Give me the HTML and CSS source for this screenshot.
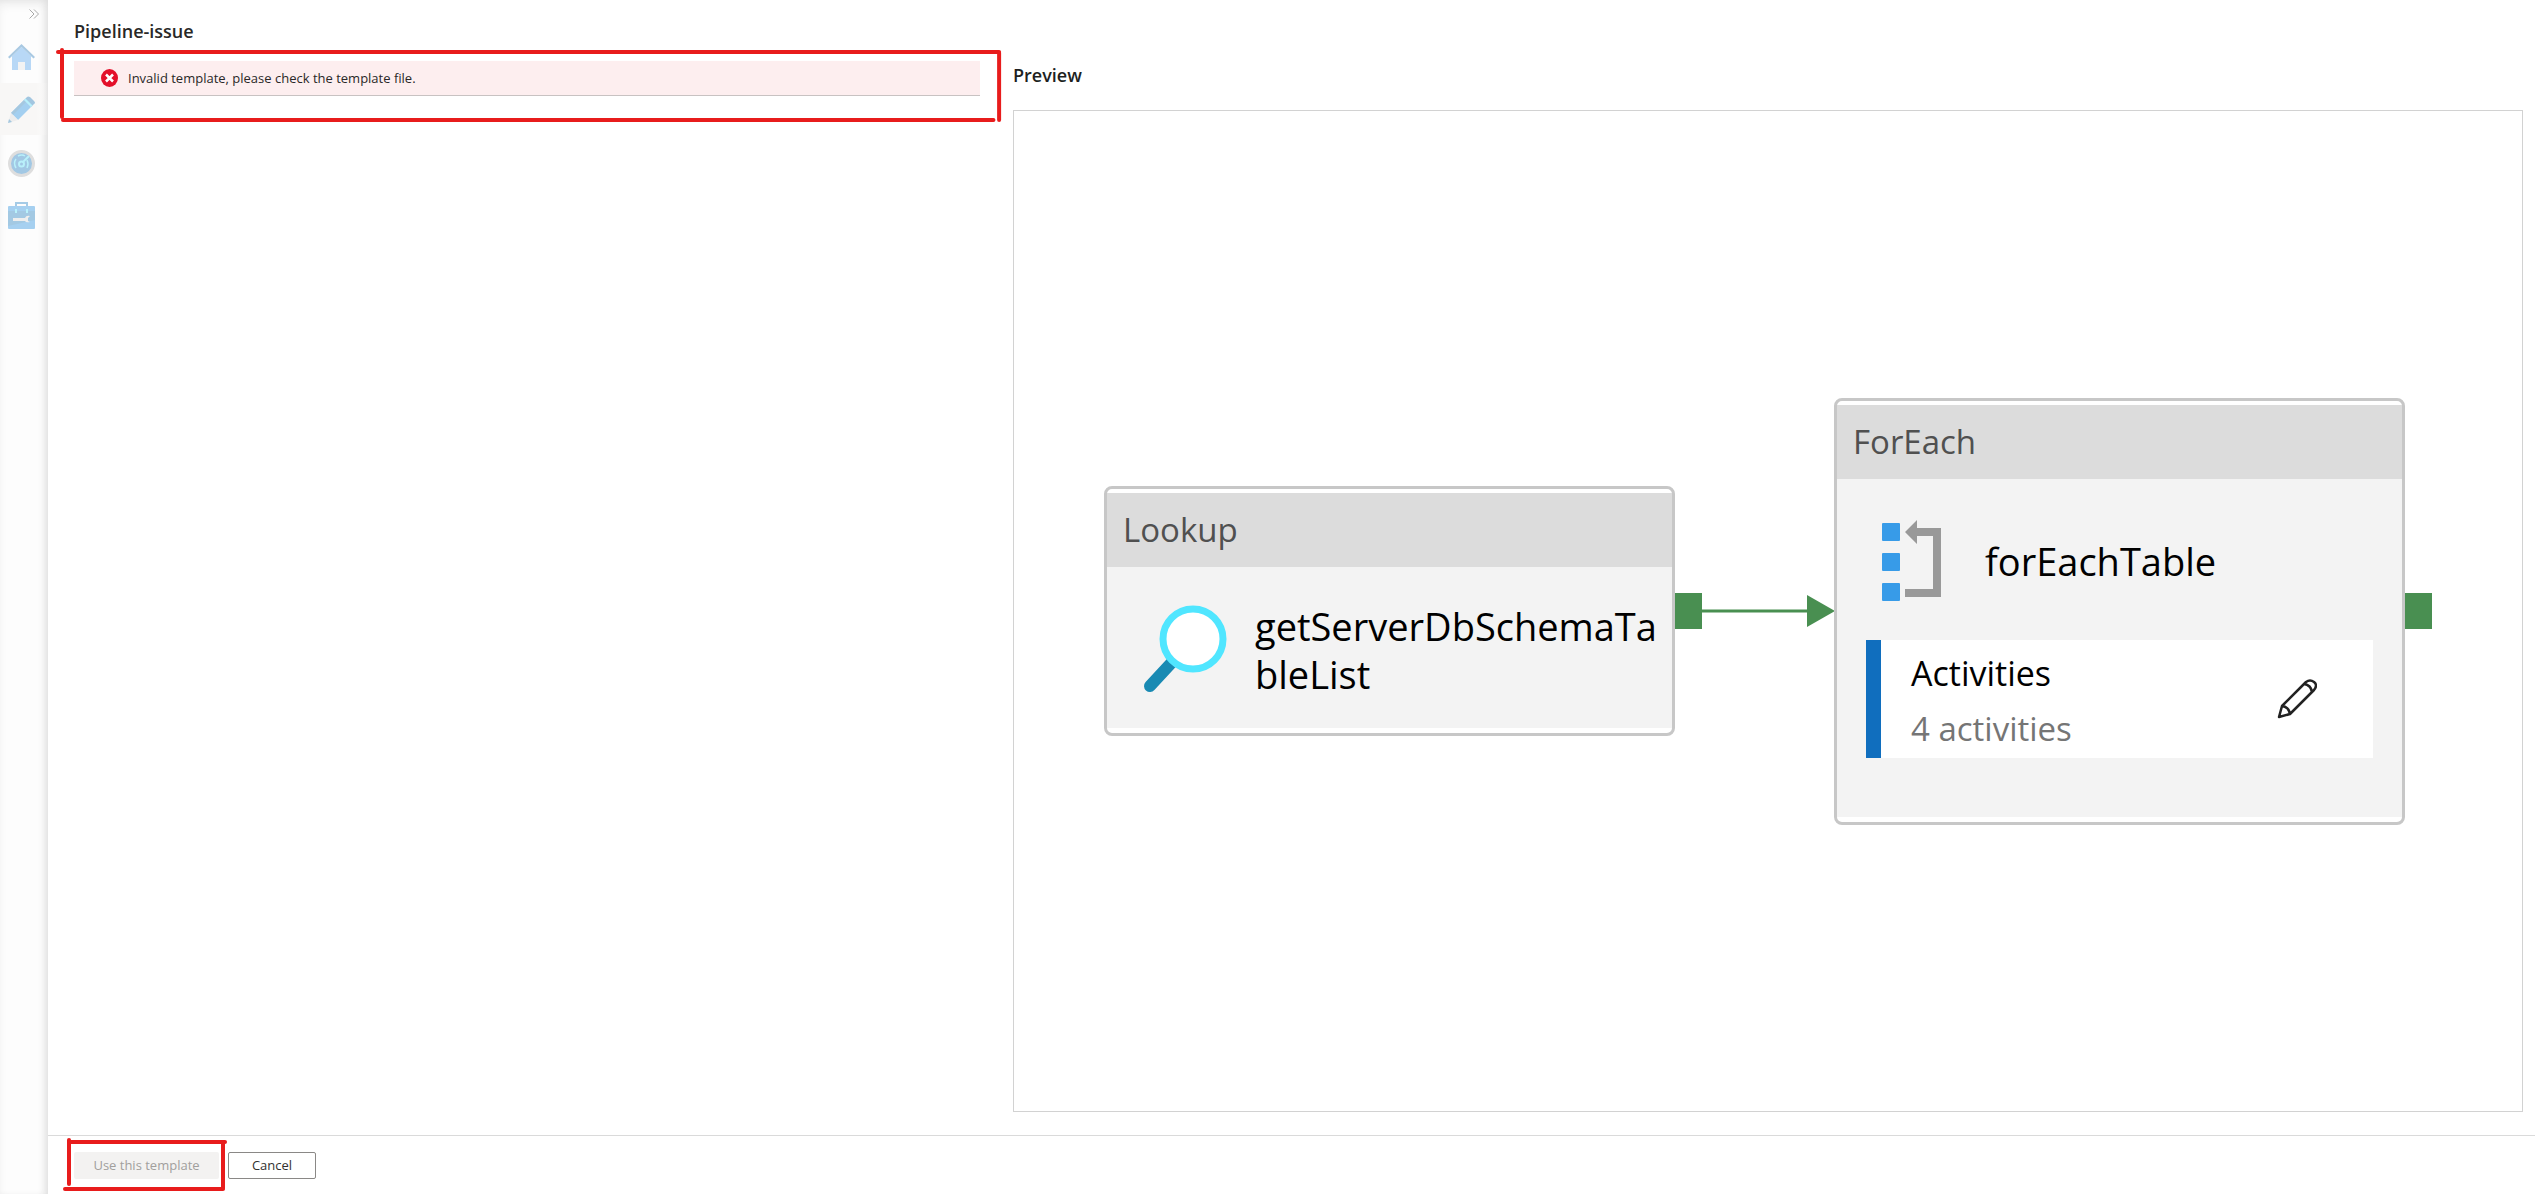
FILE: index.html
```html
<!DOCTYPE html>
<html lang="en">
<head>
<meta charset="utf-8">
<title>Pipeline-issue</title>
<link rel="stylesheet" href="styles.css">
</head>
<body>
<div class="app">
  <nav class="rail" aria-label="Main">
    <button class="rail-toggle" type="button" aria-label="Expand">
      <svg width="10" height="10" viewBox="0 0 10 10" fill="none" stroke="#a8a8a8"><path d="M.5.5 5 5 .5 9.500M5 .5 9.500 5 5 9.500"/></svg>
    </button>
    <a class="rail-item" href="#" aria-label="Home">
      <svg width="27" height="27" viewBox="0 0 27 27"><path d="M4 12 13.500 3 23 12v14H4z" fill="#b8d8f6"/><path d="M0 13 13.500 0 27 13l-1.500 1.500L13.500 3 1.500 14.500z" fill="#a9c9e2"/><path d="M10 18h7v8h-7z" fill="#f3f3f3"/></svg>
    </a>
    <a class="rail-item rail-item-active" href="#" aria-label="Author">
      <svg width="27" height="27" viewBox="0 0 27 27"><path d="M3 17 16 4l7 7-13 13z" fill="#a3cff0"/><path d="M3 17 16 4l2 2L5 19z" fill="#a5c8e0"/><path d="m16 4 3-3q1-1 3 0l4 4q2 2 0 3l-3 3z" fill="#a2c6e0"/><path d="m16 4 1.500-1.500 7 7L23 11z" fill="#b6f0fb"/><path d="m3 17 7 7-10 3z" fill="#ededed"/><path d="m1 23 3 3-4 1z" fill="#a5c8e0"/></svg>
    </a>
    <a class="rail-item" href="#" aria-label="Monitor">
      <svg width="27" height="27" viewBox="0 0 27 27" fill="none"><circle cx="13.500" cy="13.500" r="12" fill="#a2c8e4" stroke="#dedede" stroke-width="3"/><g stroke="#b9f0fa" stroke-width="1.500"><path d="M8 9q-3 4 0 9M19 10q2 4 0 8M10 6q4-2 7 0"/><circle cx="13.500" cy="14" r="2.500" stroke-width="2"/><path d="m15 12 6-6" stroke-width="2"/></g></svg>
    </a>
    <a class="rail-item" href="#" aria-label="Manage">
      <svg width="27" height="27" viewBox="0 0 27 27"><path d="M8 5V1h11v4" fill="none" stroke="#a5cbe6" stroke-width="2"/><rect y="4" width="27" height="23" rx="1" fill="#a6d0f0"/><path d="M0 9h27v9L0 24z" fill="#a3c9e3"/><path d="M7 7h2v4H7zm11 0h2v4h-2z" fill="#b9f2fb"/><path d="M5 16h12q1-3 5-2l-2 2v3l2 1q-4 1-5-1H5z" fill="#eee"/></svg>
    </a>
  </nav>
  <main class="page">
    <h1 class="page-title">Pipeline-issue</h1>
    <div class="columns">
      <section class="settings">
        <div class="alert" role="alert">
          <svg class="alert-icon" width="17" height="18" viewBox="0 0 17 18"><ellipse cx="8.500" cy="9" rx="8.500" ry="9" fill="#e3102a"/><path d="m5 5.500 7 7m0-7-7 7" stroke="#fff" stroke-width="2.500"/></svg>
          <span>Invalid template, please check the template file.</span>
        </div>
        <svg class="mark mark-alert" aria-hidden="true"><line x1="3" y1="4" x2="99.800%" y2="4"/><line x1="7" y1="2" x2="7" y2="69"/><line x1="8" y1="72" x2="99.200%" y2="72"/><line x1="99.800%" y1="5" x2="99.800%" y2="72"/></svg>
      </section>
      <section class="preview">
        <h2 class="preview-title">Preview</h2>
        <div class="canvas">
          <article class="node">
            <header class="node-type">Lookup</header>
            <div class="node-body">
              <svg class="node-icon" width="90" height="90" viewBox="0 0 90 90"><path d="M9 81 34 54" stroke="#198ab3" stroke-width="12" stroke-linecap="round"/><circle cx="52" cy="34" r="30" fill="#fff" stroke="#50e6ff" stroke-width="7"/></svg>
              <span class="node-name">getServerDbSchemaTableList</span>
            </div>
          </article>
          <span class="port"></span>
          <svg class="link" height="36" aria-hidden="true"><line x1="0" y1="18" x2="106" y2="18" stroke="#498f51" stroke-width="3"/><path d="M105 2v32l28-16z" fill="#498f51"/></svg>
          <article class="node">
            <header class="node-type">ForEach</header>
            <div class="node-body">
              <svg class="node-icon" width="90" height="90" viewBox="0 0 90 90"><g fill="#379be8"><rect x="11" y="7" width="18" height="18" rx="1"/><rect x="11" y="37" width="18" height="18" rx="1"/><rect x="11" y="67" width="18" height="18" rx="1"/></g><path d="M34 16 46 4v8h24v69H34v-8h28V20H46v8z" fill="#999"/></svg>
              <span class="node-name">forEachTable</span>
            </div>
            <div class="activities">
              <div class="activities-text">
                <span>Activities</span>
                <span class="activities-count">4 activities</span>
              </div>
              <button class="edit" type="button" aria-label="Edit activities">
                <svg width="40" height="40" viewBox="0 0 40 40" fill="none" stroke="#222" stroke-width="2.500" stroke-linejoin="round"><path d="M2 38 5 27 29 3q4-3 8 0t0 8L13 35zM5 27q7 1 8 8M27 5q7 1 8 8"/></svg>
              </button>
            </div>
          </article>
          <span class="port"></span>
        </div>
      </section>
    </div>
    <footer class="actions">
      <div class="primary-action">
        <button class="btn btn-primary" type="button" disabled>Use this template</button>
        <svg class="mark mark-action" aria-hidden="true"><line x1="6" y1="5" x2="162" y2="5"/><line x1="6" y1="3" x2="6" y2="47"/><line x1="2" y1="52" x2="160" y2="52"/><line x1="160" y1="5" x2="160" y2="51"/></svg>
      </div>
      <button class="btn btn-cancel" type="button">Cancel</button>
    </footer>
  </main>
</div>
</body>
</html>
```
FILE: styles.css
```css
* { box-sizing: border-box; }

body {
  margin: 0;
  background: #fff;
  color: #292827;
  font-family: "Segoe UI", "Open Sans", "Noto Sans", sans-serif;
  font-size: 13px;
}

h1, h2 { margin: 0; font-size: 18px; font-weight: 600; }
svg { display: block; }
button { font: inherit; cursor: pointer; }

.app { display: flex; min-height: 100vh; }

/* Navigation rail */
.rail {
  flex: none;
  width: 48px;
  background: #fdfdfd;
  box-shadow: inset -6px 0 8px -4px #dcdcdc, inset 0 6px 12px -4px #e4e4e4;
}
.rail-toggle {
  display: flex;
  justify-content: flex-end;
  width: 100%;
  height: 31px;
  padding: 9px 9px 0 0;
  border: 0;
  background: none;
}
.rail-item { display: flex; align-items: center; height: 52px; padding-left: 8px; }
.rail-item-active {
  background: linear-gradient(90deg, #f8f7f6 75%, transparent);
  margin-bottom: 2px;
}

/* Page */
.page { flex: 1; min-width: 0; display: flex; flex-direction: column; }
.page-title { height: 61px; padding: 18px 26px 0; line-height: 26px; }
.columns {
  flex: 1;
  display: grid;
  grid-template-columns: 3fr 5fr;
  gap: 33px;
  padding: 0 12px 23px 26px;
}
.settings { position: relative; }
.alert {
  display: flex;
  align-items: center;
  gap: 10px;
  height: 35px;
  padding-left: 27px;
  border-bottom: 1px solid #c8c2c2;
  background: #fdeeef;
}

/* Hand-drawn callouts */
.mark {
  position: absolute;
  overflow: visible;
  pointer-events: none;
  stroke: #e81c1c;
  stroke-width: 4px;
  stroke-linecap: round;
}
.mark-alert { left: -19px; top: -13px; width: calc(100% + 40px); height: 76px; }
.mark-action { left: -11px; top: -15px; width: 166px; height: 56px; }

/* Preview */
.preview { display: flex; flex-direction: column; min-width: 0; }
.preview-title { height: 49px; line-height: 28px; color: #201f1e; }
.canvas {
  flex: 1;
  display: flex;
  align-items: center;
  justify-content: center;
  border: 1px solid #d2d2d2;
  overflow: hidden;
}
.node {
  flex: none;
  width: 571px;
  padding: 4px 0 5px;
  border: 3px solid #c7c7c7;
  border-radius: 8px;
  background: #fff;
}
.node-type {
  height: 74px;
  padding-left: 16px;
  background: #dcdcdc;
  color: #505050;
  font-size: 33px;
  line-height: 74px;
}
.node-body {
  display: flex;
  align-items: center;
  gap: 24px;
  min-height: 161px;
  padding: 4px 8px 0 34px;
  background: #f3f3f3;
}
.node-icon { flex: none; }
.node-name {
  color: #000;
  font-size: 38px;
  line-height: 48px;
  overflow-wrap: anywhere;
}
.activities {
  display: flex;
  align-items: center;
  justify-content: space-between;
  height: 177px;
  padding-right: 56px;
  border: 0 solid #f3f3f3;
  border-width: 0 29px 59px;
  background: linear-gradient(90deg, #106ebe 15px, #fff 15px);
}
.activities-text {
  display: flex;
  flex-direction: column;
  padding: 4px 0 0 45px;
  color: #000;
  font-size: 34px;
  line-height: 56px;
}
.activities-count { color: #757575; font-size: 33px; }
.edit { padding: 0; border: 0; background: none; }
.port { flex: none; width: 27px; height: 36px; background: #498f51; }
.link { flex: none; width: 132px; overflow: visible; }

/* Footer */
.actions {
  display: flex;
  gap: 9px;
  height: 59px;
  padding: 16px 26px 0;
  border-top: 1px solid #dadada;
}
.primary-action { position: relative; }
.btn { height: 27px; padding: 0; border-radius: 2px; line-height: 25px; }
.btn-primary { width: 145px; border: 0; background: #f3f2f1; color: #a19f9d; }
.btn-cancel { width: 88px; border: 1px solid #8a8886; background: #fff; color: #323130; }
```
